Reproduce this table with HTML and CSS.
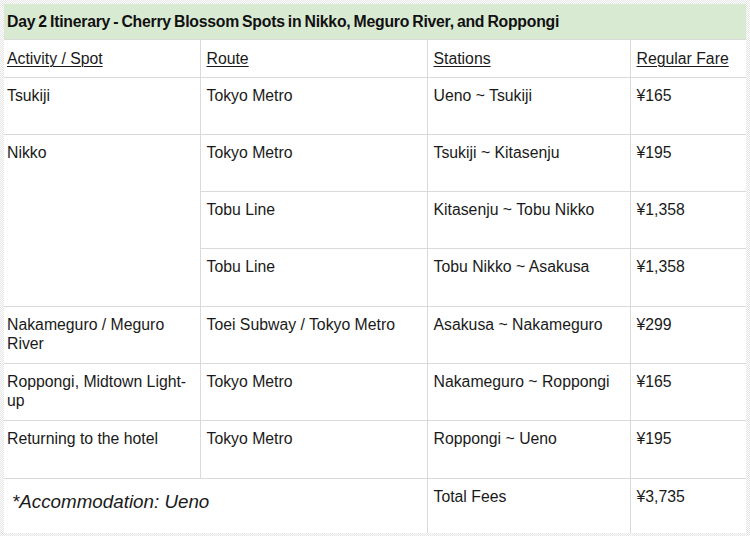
FILE: index.html
```html
<!DOCTYPE html>
<html>
<head>
<meta charset="utf-8">
<link rel="stylesheet" href="styles.css">
</head>
<body>
<div class="frame">
<table class="itin">
  <colgroup>
    <col class="c1"><col class="c2"><col class="c3"><col class="c4">
  </colgroup>
  <tr class="title-row"><td colspan="4" class="title">Day 2 Itinerary - Cherry Blossom Spots in Nikko, Meguro River, and Roppongi</td></tr>
  <tr class="head-row">
    <td class="first"><span class="u">Activity / Spot</span></td>
    <td><span class="u">Route</span></td>
    <td><span class="u">Stations</span></td>
    <td><span class="u">Regular Fare</span></td>
  </tr>
  <tr class="r">
    <td class="first">Tsukiji</td><td>Tokyo Metro</td><td>Ueno ~ Tsukiji</td><td>¥165</td>
  </tr>
  <tr class="r">
    <td class="first" rowspan="3">Nikko</td><td>Tokyo Metro</td><td>Tsukiji ~ Kitasenju</td><td>¥195</td>
  </tr>
  <tr class="r">
    <td>Tobu Line</td><td>Kitasenju ~ Tobu Nikko</td><td>¥1,358</td>
  </tr>
  <tr class="r r58">
    <td>Tobu Line</td><td>Tobu Nikko ~ Asakusa</td><td>¥1,358</td>
  </tr>
  <tr class="r">
    <td class="first">Nakameguro / Meguro River</td><td>Toei Subway / Tokyo Metro</td><td>Asakusa ~ Nakameguro</td><td>¥299</td>
  </tr>
  <tr class="r">
    <td class="first">Roppongi, Midtown Light-up</td><td>Tokyo Metro</td><td>Nakameguro ~ Roppongi</td><td>¥165</td>
  </tr>
  <tr class="r r58">
    <td class="first">Returning to the hotel</td><td>Tokyo Metro</td><td>Roppongi ~ Ueno</td><td>¥195</td>
  </tr>
  <tr class="foot-row">
    <td class="first note" colspan="2">*Accommodation: Ueno</td><td>Total Fees</td><td>¥3,735</td>
  </tr>
</table>
</div>
</body>
</html>
```
FILE: styles.css
```css
html, body {
  margin: 0;
  padding: 0;
}
body {
  width: 750px;
  height: 536px;
  background: repeating-conic-gradient(#e4e4e4 0 25%, #ffffff 0 50%) 0 0 / 2px 2px;
  font-family: "Liberation Sans", Arial, sans-serif;
  color: #1a1a1a;
}
.frame {
  padding: 4px 4px 0 4px;
}
.itin {
  border-collapse: collapse;
  table-layout: fixed;
  width: 742px;
  background: #fff;
}
.c1 { width: 196px; }
.c2 { width: 227px; }
.c3 { width: 203px; }
.c4 { width: 116px; }
.itin td {
  border: 1px solid #dadada;
  vertical-align: top;
  font-size: 15.8px;
  line-height: 19px;
  padding: 8px 4px 0 6px;
}
.itin td.first {
  padding-left: 3px;
}
.title-row td.title {
  background: #d9ead3;
  height: 35px;
  padding: 0 3px;
  vertical-align: middle;
  font-weight: bold;
  font-size: 15.8px;
  letter-spacing: -0.25px;
  word-spacing: -1px;
  color: #111;
  border-top: none;
  border-left: none;
  border-right: none;
}
.head-row td {
  height: 38px;
  padding-top: 9px;
  box-sizing: border-box;
}
.u {
  text-decoration: underline;
  text-decoration-thickness: 1px;
  text-underline-offset: 2px;
}
.r td {
  height: 57px;
  box-sizing: border-box;
}
.r58 td {
  height: 58px;
}
.foot-row td {
  height: 54px;
  box-sizing: border-box;
  border-bottom: none;
}
.itin td.note {
  font-style: italic;
  font-size: 18.8px;
  padding-top: 13px;
  padding-left: 8px;
}
.itin td:first-child {
  border-left: none;
}
.itin tr td:last-child {
  border-right: none;
}
```
